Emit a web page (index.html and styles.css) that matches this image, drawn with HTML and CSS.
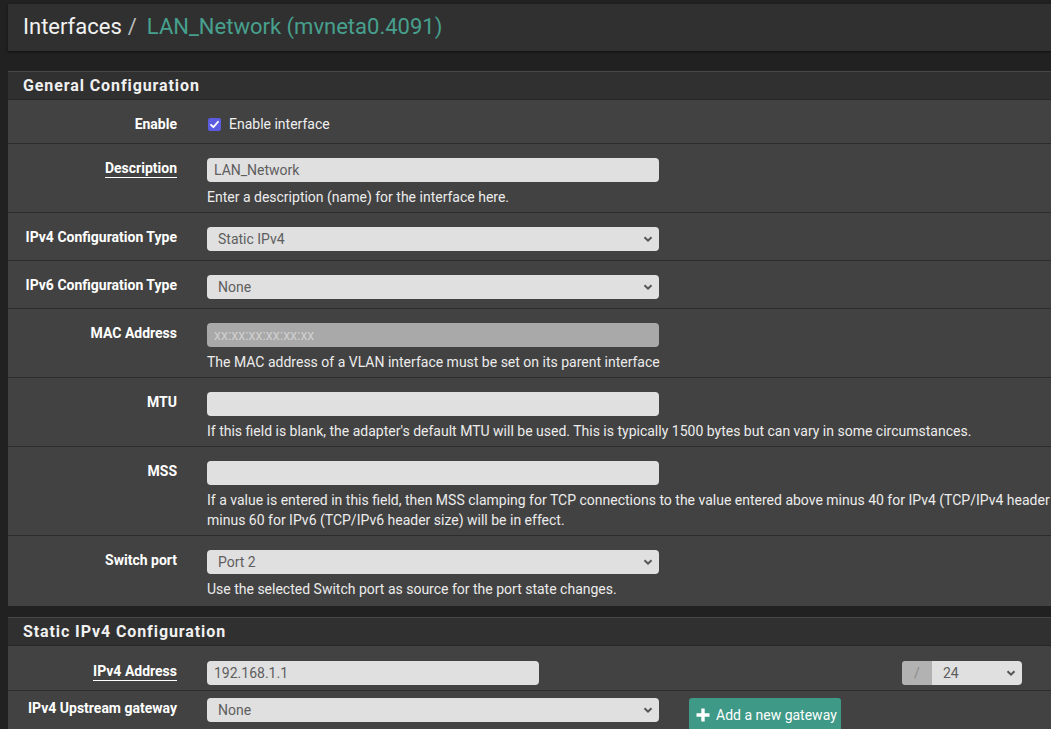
FILE: index.html
```html
<!DOCTYPE html>
<html>
<head>
<meta charset="utf-8">
<link rel="stylesheet" href="styles.css">
</head>
<body>
<div class="page">
  <div class="crumbs">
    <h1><span class="crumb-root">Interfaces</span><span class="crumb-sep">/</span><span class="crumb-leaf">LAN_Network (mvneta0.4091)</span></h1>
  </div>

  <section class="panel">
    <div class="panel-heading"><h2>General Configuration</h2></div>
    <div class="panel-body general">
      <div class="row">
        <div class="label">Enable</div>
        <div class="field">
          <label class="check"><span class="checkbox"><svg viewBox="0 0 13 13" width="13" height="13"><path d="M3 6.8 L5.4 9.2 L10 3.8" fill="none" stroke="#fff" stroke-width="1.8" stroke-linecap="round" stroke-linejoin="round"/></svg></span>Enable interface</label>
        </div>
      </div>
      <div class="row">
        <div class="label"><span class="req">Description</span></div>
        <div class="field">
          <div class="input">LAN_Network</div>
          <div class="help">Enter a description (name) for the interface here.</div>
        </div>
      </div>
      <div class="row">
        <div class="label">IPv4 Configuration Type</div>
        <div class="field">
          <div class="input select">Static IPv4<svg class="chev" viewBox="0 0 10 10" width="10" height="10"><path d="M1.5 3.2 L5 6.7 L8.5 3.2" fill="none" stroke="#555" stroke-width="2"/></svg></div>
        </div>
      </div>
      <div class="row">
        <div class="label">IPv6 Configuration Type</div>
        <div class="field">
          <div class="input select">None<svg class="chev" viewBox="0 0 10 10" width="10" height="10"><path d="M1.5 3.2 L5 6.7 L8.5 3.2" fill="none" stroke="#555" stroke-width="2"/></svg></div>
        </div>
      </div>
      <div class="row">
        <div class="label">MAC Address</div>
        <div class="field">
          <div class="input disabled"><span class="placeholder">xx:xx:xx:xx:xx:xx</span></div>
          <div class="help">The MAC address of a VLAN interface must be set on its parent interface</div>
        </div>
      </div>
      <div class="row">
        <div class="label">MTU</div>
        <div class="field">
          <div class="input"></div>
          <div class="help">If this field is blank, the adapter's default MTU will be used. This is typically 1500 bytes but can vary in some circumstances.</div>
        </div>
      </div>
      <div class="row">
        <div class="label">MSS</div>
        <div class="field">
          <div class="input"></div>
          <div class="help">If a value is entered in this field, then MSS clamping for TCP connections to the value entered above minus 40 for IPv4 (TCP/IPv4 header size) and minus 60 for IPv6 (TCP/IPv6 header size) will be in effect.</div>
        </div>
      </div>
      <div class="row">
        <div class="label">Switch port</div>
        <div class="field">
          <div class="input select">Port 2<svg class="chev" viewBox="0 0 10 10" width="10" height="10"><path d="M1.5 3.2 L5 6.7 L8.5 3.2" fill="none" stroke="#555" stroke-width="2"/></svg></div>
          <div class="help">Use the selected Switch port as source for the port state changes.</div>
        </div>
      </div>
    </div>
  </section>

  <section class="panel">
    <div class="panel-heading"><h2>Static IPv4 Configuration</h2></div>
    <div class="panel-body">
      <div class="row addr-row">
        <div class="label"><span class="req">IPv4 Address</span></div>
        <div class="field inline">
          <div class="input addr">192.168.1.1</div>
          <div class="cidr">
            <span class="addon">/</span>
            <div class="input select mask">24<svg class="chev" viewBox="0 0 10 10" width="10" height="10"><path d="M1.5 3.2 L5 6.7 L8.5 3.2" fill="none" stroke="#555" stroke-width="2"/></svg></div>
          </div>
        </div>
      </div>
      <div class="row gw-row">
        <div class="label">IPv4 Upstream gateway</div>
        <div class="field inline">
          <div class="input select">None<svg class="chev" viewBox="0 0 10 10" width="10" height="10"><path d="M1.5 3.2 L5 6.7 L8.5 3.2" fill="none" stroke="#555" stroke-width="2"/></svg></div>
          <button class="btn"><svg viewBox="0 0 14 14" width="14" height="14"><path d="M7 0.5 V13.5 M0.5 7 H13.5" stroke="#fff" stroke-width="3.4"/></svg>Add a new gateway</button>
        </div>
      </div>
    </div>
  </section>
</div>
</body>
</html>
```

FILE: styles.css
```css
html, body {
  margin: 0;
  padding: 0;
  background: #212121;
  overflow: hidden;
}
body {
  font-family: Roboto, "Liberation Sans", Arial, sans-serif;
  font-size: 14px;
  color: #e6e6e6;
}
.page {
  width: 1200px;
  padding: 4px 0 0 8px;
}
.crumbs {
  background: #303030;
  height: 47px;
  box-shadow: 0 1px 2px rgba(0,0,0,0.5);
  display: flex;
  align-items: center;
  padding-left: 15px;
  margin-bottom: 20px;
}
.crumbs h1 {
  margin: 0;
  font-weight: 400;
  font-size: 22px;
  line-height: 28px;
  margin-top: -2px;
}
.crumb-root { color: #f2f2f2; }
.crumb-sep { color: #bdbdbd; margin: 0 10px 0 6px; }
.crumb-leaf { color: #47a08e; }

.panel {
  margin-bottom: 11px;
}
.panel-heading {
  background: #303030;
  border-top: 1px solid #474747;
  border-bottom: 1px solid #262626;
  height: 27px;
  display: flex;
  align-items: center;
  padding-left: 15px;
}
.panel-heading h2 {
  margin: 0;
  font-size: 16px;
  font-weight: 700;
  letter-spacing: 0.9px;
  color: #f0f0f0;
}
.panel-body {
  background: #424242;
}
.panel-body.general {
  padding-bottom: 2px;
}
.row {
  display: flex;
  padding: 14px 0 9px;
  border-bottom: 1px solid #2c2c2c;
}
.row:last-child { border-bottom: none; }
.label {
  flex: 0 0 184px;
  box-sizing: border-box;
  padding-right: 15px;
  text-align: right;
  font-weight: 700;
  color: #fff;
  line-height: 20px;
}
.req {
  border-bottom: 1px solid #fff;
  padding-bottom: 1px;
}
.field {
  padding-left: 15px;
  line-height: 20px;
}
.field.inline {
  display: flex;
  align-items: flex-start;
}
.check {
  display: flex;
  align-items: center;
  color: #f0f0f0;
}
.checkbox {
  width: 13px;
  height: 13px;
  background: #5b5ce0;
  border-radius: 2px;
  margin: 0 8px 0 1px;
  display: inline-flex;
}
.input {
  width: 452px;
  height: 24px;
  box-sizing: border-box;
  background: #e0e0e0;
  border-radius: 4px;
  color: #5e5e5e;
  padding: 0 7px;
  line-height: 24px;
  position: relative;
}
.input.select {
  padding-left: 11px;
}
.chev {
  position: absolute;
  right: 6px;
  top: 7px;
}
.input.disabled {
  background: #a9a9a9;
}
.placeholder {
  color: #cfcfcf;
  font-size: 14px;
}
.help {
  margin-top: 5px;
  margin-bottom: -4px;
  color: #ececec;
  max-width: 930px;
}
.addr-row {
  padding-top: 15px;
  padding-bottom: 5px;
}
.input.addr {
  width: 332px;
}
.cidr {
  display: flex;
  margin-left: 363px;
}
.addon {
  width: 30px;
  height: 24px;
  background: #b2b2b2;
  color: #8a8a8a;
  text-align: center;
  line-height: 24px;
  border-radius: 3px 0 0 3px;
}
.input.mask {
  width: 90px;
  border-radius: 0 4px 4px 0;
}
.gw-row {
  padding-top: 7px;
}
.btn {
  margin-left: 30px;
  width: 152px;
  height: 34px;
  background: #3e9a87;
  border: none;
  border-radius: 3px;
  color: #fff;
  font-family: inherit;
  font-size: 14px;
  display: flex;
  align-items: center;
  padding: 0 0 0 7px;
  gap: 6px;
  margin-bottom: -10px;
}
```
